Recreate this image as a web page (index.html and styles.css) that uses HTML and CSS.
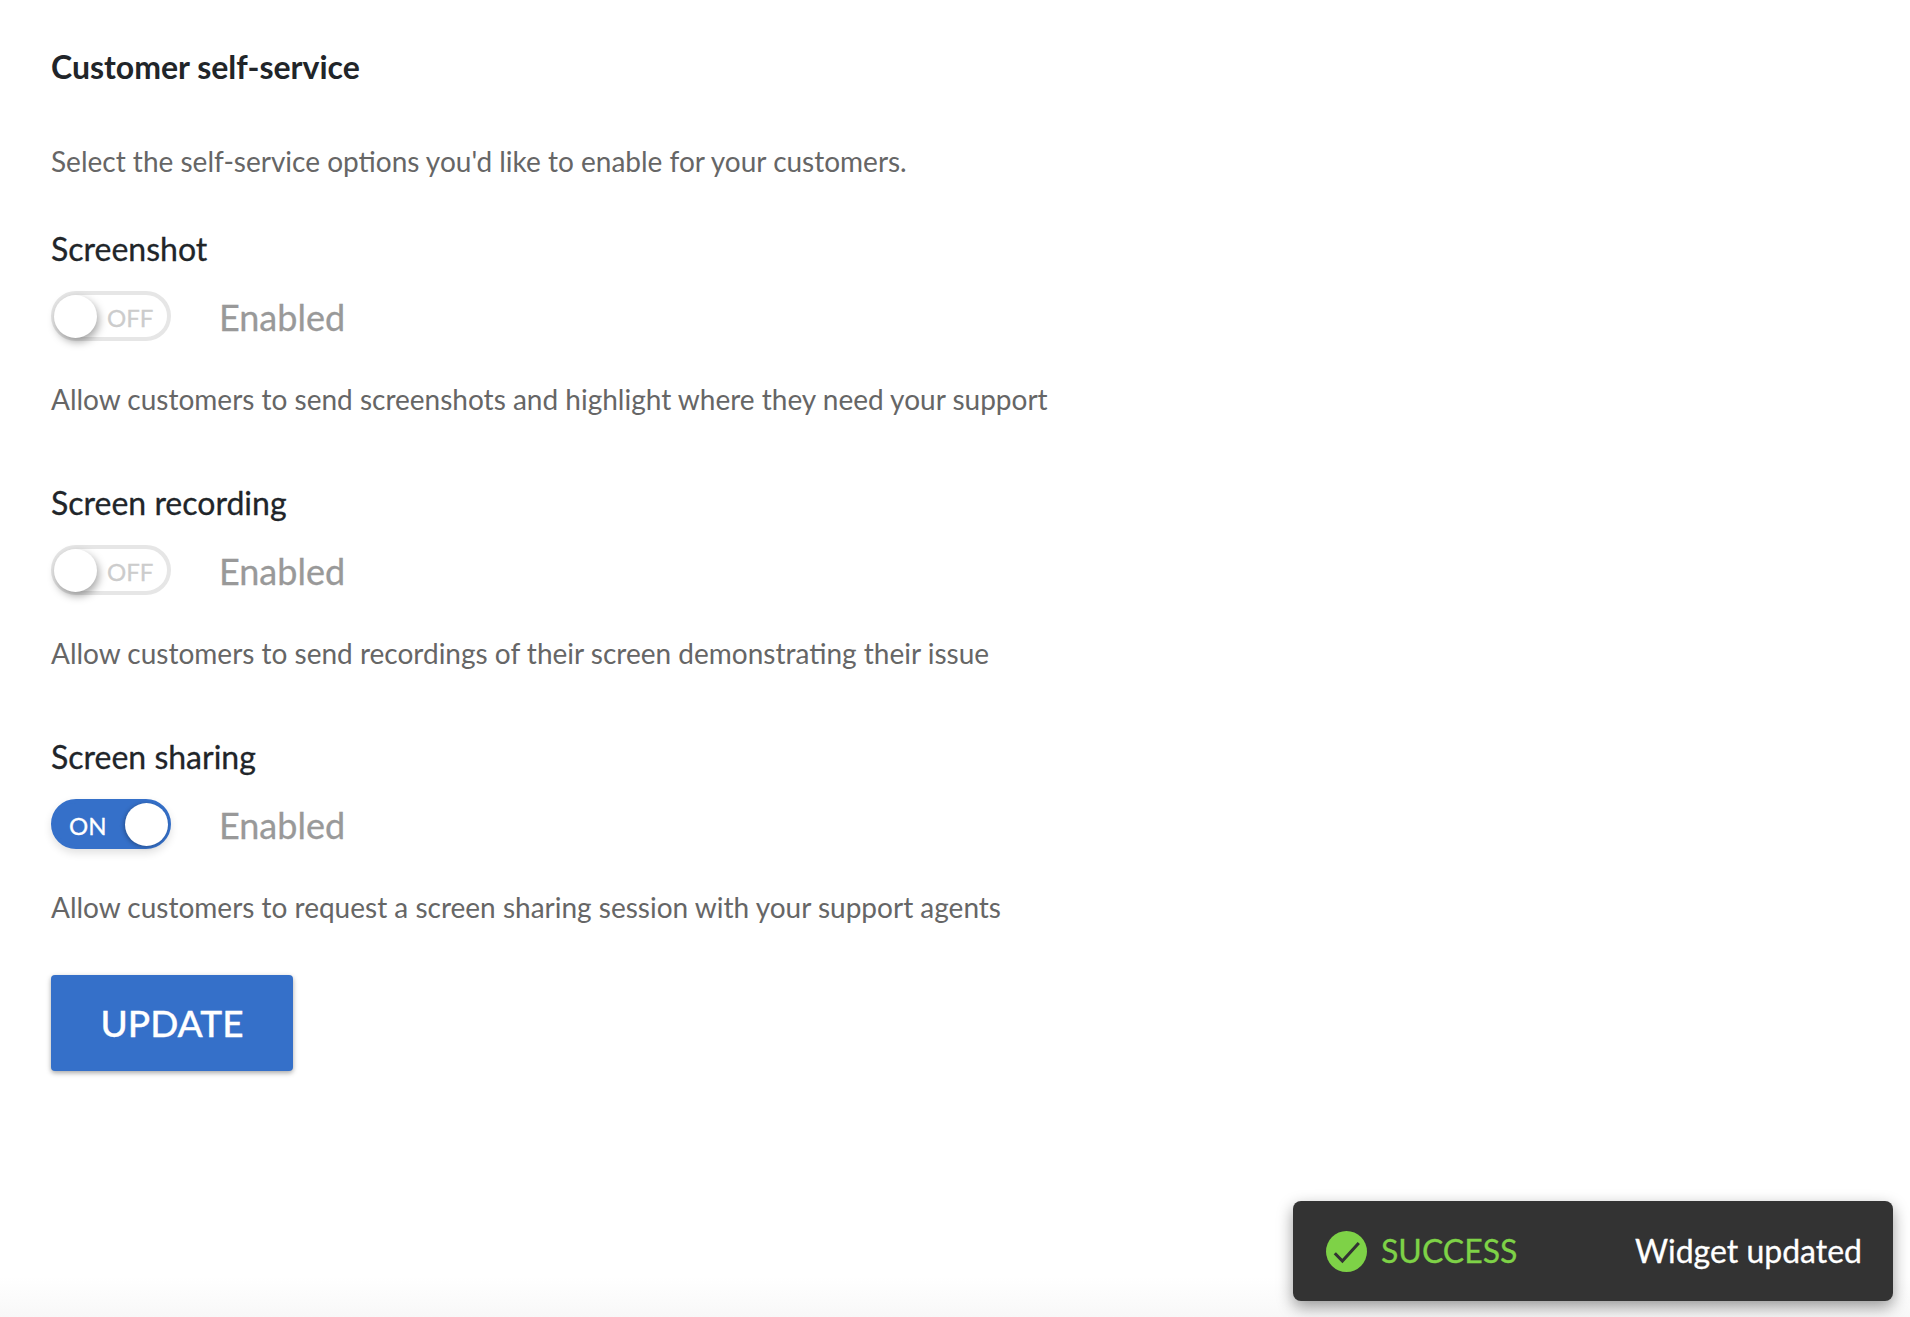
FILE: index.html
```html
<!DOCTYPE html>
<html lang="en">
<head>
  <meta charset="UTF-8">
  <meta name="viewport" content="width=device-width, initial-scale=1.0">
  <title>Customer self-service</title>
  <link rel="stylesheet" href="styles.css">
</head>
<body>
  <div class="container">
    <h2 class="page-title">Customer self-service</h2>
    <p class="page-description">Select the self-service options you'd like to enable for your customers.</p>

    <div class="option">
      <div class="option-title">Screenshot</div>
      <div class="option-row">
        <div class="toggle"><span class="toggle-knob"></span><span class="toggle-label">OFF</span></div>
        <span class="option-state">Enabled</span>
      </div>
      <div class="option-description">Allow customers to send screenshots and highlight where they need your support</div>
    </div>

    <div class="option">
      <div class="option-title">Screen recording</div>
      <div class="option-row">
        <div class="toggle"><span class="toggle-knob"></span><span class="toggle-label">OFF</span></div>
        <span class="option-state">Enabled</span>
      </div>
      <div class="option-description">Allow customers to send recordings of their screen demonstrating their issue</div>
    </div>

    <div class="option">
      <div class="option-title">Screen sharing</div>
      <div class="option-row">
        <div class="toggle toggle-on"><span class="toggle-label">ON</span><span class="toggle-knob"></span></div>
        <span class="option-state">Enabled</span>
      </div>
      <div class="option-description">Allow customers to request a screen sharing session with your support agents</div>
    </div>

    <button type="button" class="update-btn">UPDATE</button>
  </div>

  <div class="bottom-fade"></div>

  <div class="toast">
    <svg class="toast-icon" viewBox="0 0 40 40" aria-hidden="true">
      <circle cx="20" cy="20" r="20" fill="#7ed247"/>
      <path d="M8.6 21.7l7.4 7.6 16-17.6" fill="none" stroke="#333" stroke-width="3"/>
    </svg>
    <span class="toast-status">SUCCESS</span>
    <span class="toast-message">Widget updated</span>
  </div>
</body>
</html>
```

FILE: styles.css
```css
* {
  box-sizing: border-box;
}

html,
body {
  height: 100%;
}

body {
  margin: 0;
  font-family: 'Lato', sans-serif;
  background-color: #fff;
  overflow: hidden;
}

.container {
  padding: 47px 51px 0;
}

.page-title {
  margin: 0 0 54px;
  font-size: 32px;
  line-height: 40px;
  font-weight: 700;
  color: #212529;
}

.page-description {
  margin: 0 0 48px;
  font-size: 28px;
  line-height: 40px;
  color: #666;
}

.option {
  margin-bottom: 64px;
}

.option:last-of-type {
  margin-bottom: 48px;
}

.option-title {
  font-size: 32px;
  line-height: 40px;
  color: #212529;
  -webkit-text-stroke: 0.3px #212529;
}

.option-row {
  display: flex;
  align-items: flex-start;
  gap: 48px;
  margin-top: 22px;
}

.option-state {
  font-size: 36px;
  line-height: 53px;
  color: #999;
  -webkit-text-stroke: 0.3px #999;
}

.option-description {
  margin-top: 35px;
  font-size: 28px;
  line-height: 40px;
  color: #666;
}

.toggle {
  display: flex;
  align-items: center;
  width: 120px;
  height: 50px;
  padding: 0 3px;
  border: 4px solid #e6e6e6;
  border-radius: 25px;
  background-color: #fff;
}

.toggle-knob {
  flex: none;
  width: 43px;
  height: 43px;
  margin-left: -4px;
  border-radius: 50%;
  background-color: #fff;
  box-shadow: 2px 4px 8px rgba(0, 0, 0, 0.35);
}

.toggle-label {
  margin-left: 10px;
  padding-top: 2px;
  font-size: 24px;
  color: #ccc;
  -webkit-text-stroke: 0.3px #ccc;
}

.toggle-on {
  justify-content: space-between;
  border-color: #3570c9;
  background-color: #3570c9;
  box-shadow: 0 4px 8px rgba(0, 0, 0, 0.12);
}

.toggle-on .toggle-knob {
  margin: 0 -4px 0 0;
  box-shadow: -1px 1px 4px rgba(0, 0, 0, 0.3);
}

.toggle-on .toggle-label {
  margin-left: 11px;
  color: #fff;
  -webkit-text-stroke: 0.3px #fff;
}

.update-btn {
  display: block;
  width: 242px;
  height: 96px;
  padding: 0 0 1px;
  border: none;
  border-radius: 4px;
  background-color: #3570c9;
  color: #fff;
  font-family: inherit;
  font-size: 37px;
  font-weight: 500;
  -webkit-text-stroke: 0.3px #fff;
  box-shadow: 0 2px 5px rgba(0, 0, 0, 0.35);
  cursor: pointer;
}

.bottom-fade {
  position: absolute;
  left: 0;
  right: 0;
  bottom: 0;
  height: 40px;
  background: linear-gradient(#fff, #f8f8f8);
}

.toast {
  position: absolute;
  left: 1293px;
  top: 1201px;
  display: flex;
  align-items: center;
  width: 600px;
  height: 100px;
  padding: 0 31px 0 33px;
  border-radius: 8px;
  background-color: #333;
  box-shadow: 0 6px 16px rgba(0, 0, 0, 0.4);
}

.toast-icon {
  flex: none;
  width: 41px;
  height: 41px;
}

.toast-status {
  margin: 0 0 2px 14px;
  font-size: 32px;
  color: #7ed247;
  -webkit-text-stroke: 0.3px #7ed247;
}

.toast-message {
  margin: 0 0 2px auto;
  font-size: 32px;
  color: #fff;
  -webkit-text-stroke: 0.3px #fff;
}
```
